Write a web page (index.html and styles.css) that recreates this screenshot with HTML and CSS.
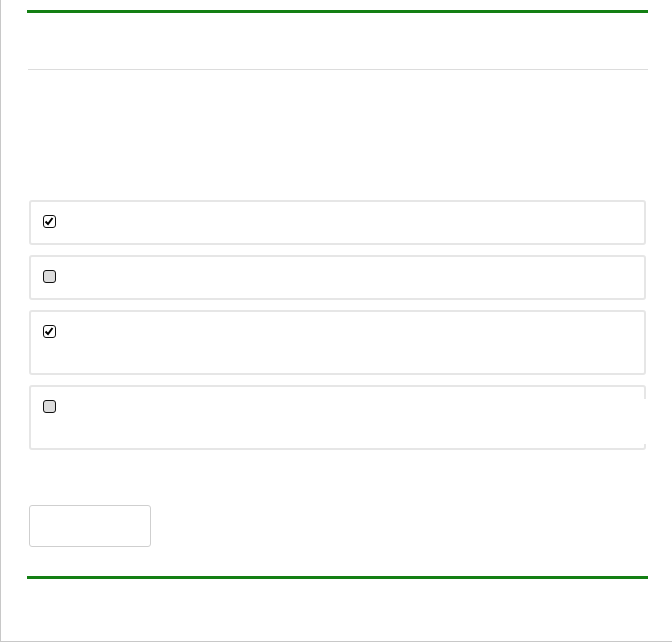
FILE: index.html
```html
<!DOCTYPE html>
<html>
<head>
<meta charset="utf-8">
<link rel="stylesheet" href="styles.css">
</head>
<body>
<div class="page">
  <div class="rule-green top"></div>
  <div class="header-space"></div>
  <div class="rule-gray"></div>
  <div class="intro-space"></div>
  <div class="cards">
    <div class="card short">
      <span class="box checked"><svg viewBox="0 0 12 12" width="12" height="12"><path d="M2.5 6.5 L5 9 L9.5 3" fill="none" stroke="#000" stroke-width="2"/></svg></span>
    </div>
    <div class="card short">
      <span class="box"></span>
    </div>
    <div class="card tall">
      <span class="box checked"><svg viewBox="0 0 12 12" width="12" height="12"><path d="M2.5 6.5 L5 9 L9.5 3" fill="none" stroke="#000" stroke-width="2"/></svg></span>
    </div>
    <div class="card tall open-right">
      <span class="box"></span>
    </div>
  </div>
  <div class="actions">
    <button class="btn" type="button"></button>
  </div>
  <div class="rule-green bottom"></div>
</div>
</body>
</html>
```
FILE: styles.css
```css
html, body {
  margin: 0;
  padding: 0;
  background: #fff;
  font-family: "Liberation Sans", Arial, sans-serif;
}
.page {
  box-sizing: border-box;
  width: 672px;
  height: 642px;
  border-left: 1px solid #c8c8c8;
  border-bottom: 1px solid #c8c8c8;
  padding-left: 26px;
  padding-top: 10px;
}
.rule-green {
  width: 621px;
  height: 3px;
  background: #137f13;
}
.header-space {
  height: 56px;
}
.rule-gray {
  margin-left: 1px;
  width: 620px;
  height: 1px;
  background: #dcdcdc;
}
.intro-space {
  height: 130px;
}
.cards {
  margin-left: 2px;
  width: 617px;
  display: flex;
  flex-direction: column;
  gap: 10px;
}
.card {
  box-sizing: border-box;
  border: 2px solid #e6e6e6;
  border-radius: 3px;
  padding: 13px 0 0 12px;
  position: relative;
}
.card.short { height: 45px; }
.card.tall { height: 65px; }
.card.open-right::after {
  content: "";
  position: absolute;
  right: -2px;
  top: 12px;
  bottom: 4px;
  width: 2px;
  background: #fff;
}
.box {
  display: block;
  box-sizing: border-box;
  width: 13px;
  height: 13px;
  border: 1.5px solid #111;
  border-radius: 3px;
  background: #dcdcdc;
  position: relative;
}
.box.checked {
  background: #fff;
}
.box svg {
  position: absolute;
  left: -1px;
  top: -1px;
}
.actions {
  margin-left: 2px;
  padding-top: 55px;
}
.btn {
  display: block;
  box-sizing: border-box;
  width: 122px;
  height: 42px;
  border: 1px solid #cfcfcf;
  border-radius: 3px;
  background: #fff;
  padding: 0;
}
.rule-green.bottom {
  margin-top: 29px;
}
```
